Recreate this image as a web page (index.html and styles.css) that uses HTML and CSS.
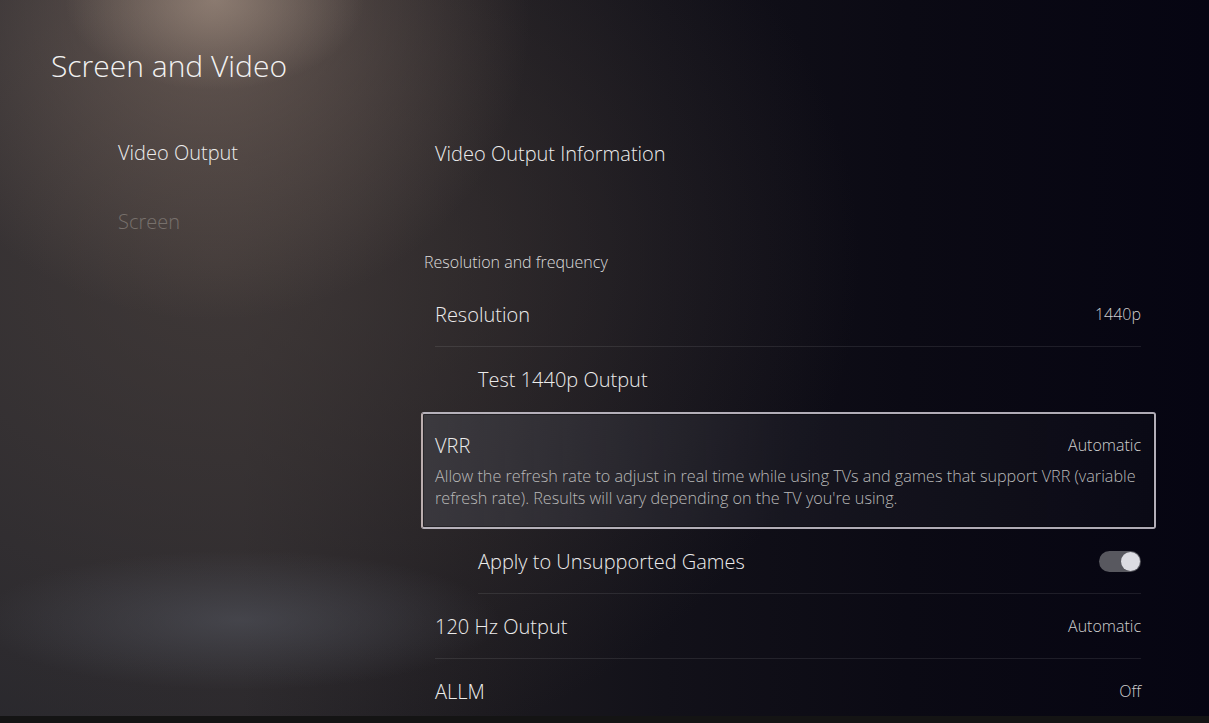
FILE: index.html
```html
<!DOCTYPE html>
<html lang="en">
<head>
<meta charset="utf-8">
<title>Screen and Video</title>
<link rel="stylesheet" href="styles.css">
</head>
<body>
<div class="screen">
  <header class="header">
    <h1 class="title">Screen and Video</h1>
  </header>
  <div class="layout">
    <nav class="nav">
      <div class="nav-item active">Video Output</div>
      <div class="nav-item dim">Screen</div>
    </nav>
    <main class="main">
      <div class="row info"><span class="label">Video Output Information</span></div>
      <div class="section-title">Resolution and frequency</div>
      <div class="row"><div class="row-inner divider"><span class="label">Resolution</span><span class="value">1440p</span></div></div>
      <div class="row"><div class="row-inner sub"><span class="label">Test 1440p Output</span></div></div>
      <div class="row focused">
        <div class="focus-inner">
          <div class="focus-head"><span class="label">VRR</span><span class="value">Automatic</span></div>
          <p class="desc">Allow the refresh rate to adjust in real time while using TVs and games that support VRR (variable refresh rate). Results will vary depending on the TV you're using.</p>
        </div>
      </div>
      <div class="row"><div class="row-inner sub divider"><span class="label">Apply to Unsupported Games</span><span class="toggle"><span class="knob"></span></span></div></div>
      <div class="row"><div class="row-inner divider"><span class="label">120 Hz Output</span><span class="value">Automatic</span></div></div>
      <div class="row"><div class="row-inner"><span class="label">ALLM</span><span class="value">Off</span></div></div>
    </main>
  </div>
</div>
<div class="band"></div>
</body>
</html>
```

FILE: styles.css
```css
* { box-sizing: border-box; }
html, body { margin: 0; padding: 0; }
body {
  width: 1209px;
  height: 723px;
  overflow: hidden;
  background: #121212;
  font-family: "Open Sans", "Noto Sans", sans-serif;
  color: #e8e8e8;
}
.screen {
  height: 716px;
  overflow: hidden;
  background:
    radial-gradient(ellipse 150px 90px at 215px 0px, rgba(175,155,140,0.55), rgba(175,155,140,0) 100%),
    radial-gradient(ellipse 320px 300px at 210px 20px, rgba(135,115,104,0.55), rgba(135,115,104,0) 100%),
    radial-gradient(ellipse 260px 70px at 240px 620px, rgba(85,88,98,0.55), rgba(85,88,98,0) 100%),
    radial-gradient(ellipse 640px 520px at 220px 260px, rgba(72,63,60,0.7), rgba(72,63,60,0) 100%),
    linear-gradient(to right, #29282d 0%, #2a282c 20%, #1c1a1f 40%, #121119 55%, #0b0a14 75%, #060512 100%);
}
.header { padding: 44px 0 0 51px; height: 130px; }
.title {
  margin: 0;
  font-size: 30px;
  font-weight: 300;
  line-height: 44px;
  color: #f2f2f2;
}
.layout { display: flex; }
.nav {
  width: 421px;
  padding-left: 118px;
  display: flex;
  flex-direction: column;
}
.nav-item {
  font-size: 20px;
  font-weight: 300;
  height: 46px;
  line-height: 46px;
  margin-bottom: 23px;
}
.nav-item.active { color: #ececec; }
.nav-item.dim { color: #77706c; }
.main { width: 735px; display: flex; flex-direction: column; }
.label { font-size: 20px; font-weight: 300; color: #ececec; }
.value { font-size: 16px; font-weight: 300; color: #cfcfcf; }
.row.info { padding: 0 14px; height: 46px; display: flex; align-items: center; }
.section-title {
  margin-top: 73px;
  padding-left: 3px;
  font-size: 16px;
  font-weight: 300;
  color: #dcdcdc;
  height: 33px;
  line-height: 26px;
}
.row { padding: 0 15px 0 14px; }
.row-inner {
  height: 65px;
  display: flex;
  align-items: center;
  justify-content: space-between;
  border-bottom: 1px solid transparent;
}
.row-inner.sub { margin-left: 43px; }
.row-inner.divider { border-bottom-color: rgba(255,255,255,0.09); }
.row.focused { padding: 0; }
.focus-inner {
  height: 117px;
  border: 2px solid rgba(205,200,210,0.85);
  border-left-color: rgba(215,200,200,0.85);
  border-radius: 3px;
  padding: 17px 13px 0 12px;
  background: linear-gradient(to right, rgba(70,70,78,0.55), rgba(40,40,50,0.35) 50%, rgba(20,20,30,0.3));
  box-shadow: inset 0 0 0 1px rgba(0,0,0,0.35);
}
.focus-head {
  display: flex;
  justify-content: space-between;
  align-items: center;
  height: 28px;
}
.desc {
  margin: 6px 0 0;
  font-size: 16.2px;
  font-weight: 300;
  line-height: 22px;
  color: #b9b9b9;
}
.toggle {
  width: 42px;
  height: 21px;
  border-radius: 11px;
  background: #58585f;
  position: relative;
}
.knob {
  position: absolute;
  right: 1px;
  top: 1px;
  width: 19px;
  height: 19px;
  border-radius: 50%;
  background: #dcdce2;
}
.band { height: 7px; background: #141414; }
```
